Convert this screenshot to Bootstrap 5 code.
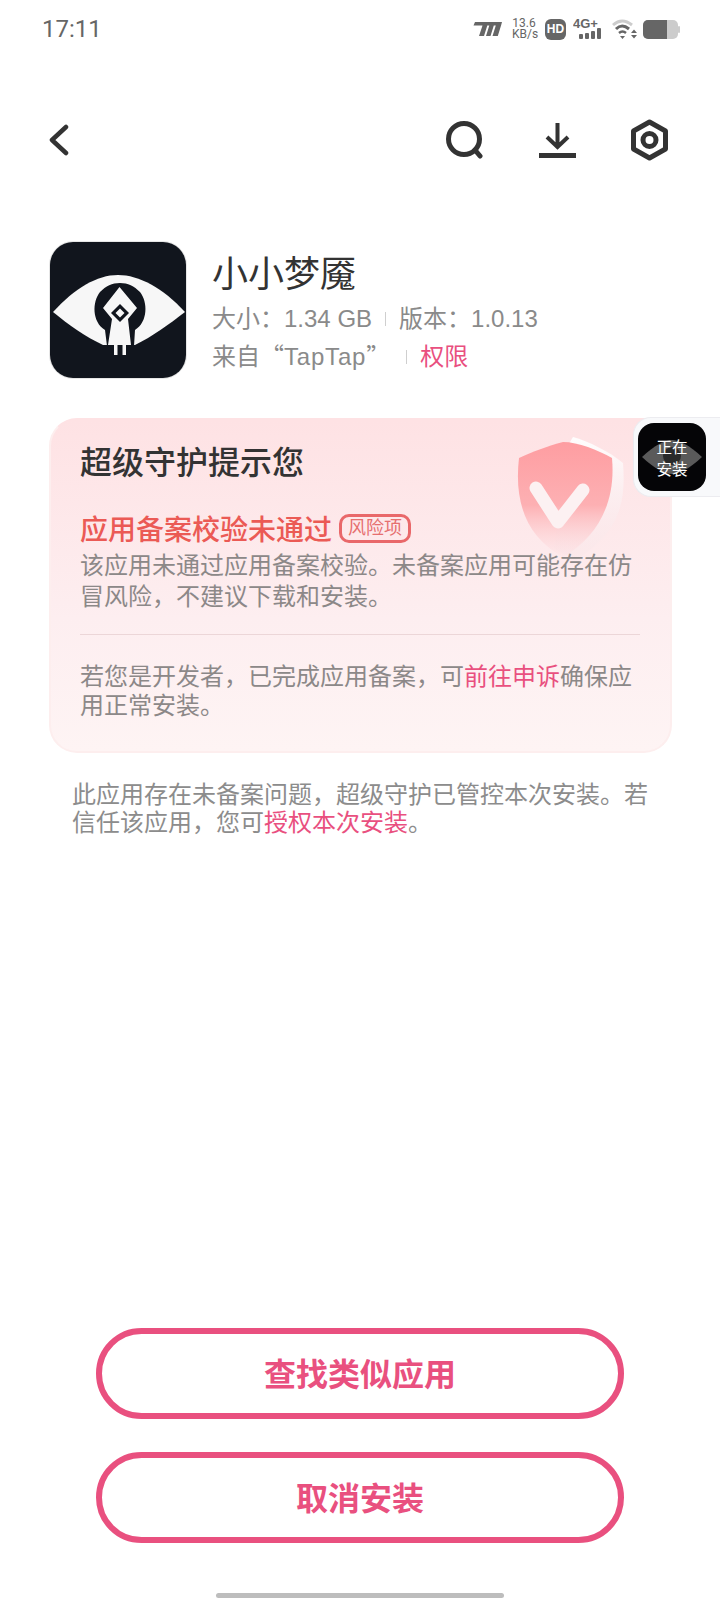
<!DOCTYPE html>
<html lang="zh-CN">
<head>
<meta charset="utf-8">
<title>小小梦魇</title>
<link href="https://cdn.jsdelivr.net/npm/bootstrap@5.3.0/dist/css/bootstrap.min.css" rel="stylesheet">
<style>
:root{--pink:#e9507f;--grey:#8a8a8a}
html,body{margin:0;background:#fff}
body{font-family:"Liberation Sans","Noto Sans CJK SC",sans-serif;font-size:24px;color:var(--grey)}
.screen{width:720px;height:1600px;position:relative;overflow:hidden}
.statusline{height:56px;padding:2px 40px 0 42px}
.clock{font-family:Roboto,sans-serif;font-weight:400;font-size:24px;color:#666}
.speed{font-family:Roboto,sans-serif;color:#666;font-size:12px;line-height:11px;width:24px;text-align:center}
.hdtag{width:21px;height:21px;border-radius:6px;background:#666;color:#fff;font:bold 12px/21px "Liberation Sans",sans-serif;text-align:center}
.toolbar{height:60px;margin-top:54px;padding:0 52px 0 48px}
.toolgroup{gap:55px}
.apphead{margin-top:71px;padding-left:49px;gap:25px}
.appicon{width:138px;height:138px;flex:none;border-radius:24px;border:1px solid #e6e6e6;overflow:hidden}
.appicon svg{display:block}
.appname{font-size:36px;line-height:46px;color:#333;font-family:"Noto Sans CJK SC",sans-serif;margin-top:7px}
.metaline{line-height:36px;white-space:nowrap}
.vbar{display:inline-block;width:1px;height:14px;background:#cfcfcf;margin:0 13px;vertical-align:1px}
.vbar.shifted{margin:0 13px 0 16px}
.cjkquote{font-family:"Noto Sans CJK SC",sans-serif}
.latinname{letter-spacing:.8px}
.pinklink{color:var(--pink);text-decoration:none}
.guard{margin:39px 48px 0 49px;height:335px;border-radius:28px;padding:16px 30px 0 29px;position:relative;background:linear-gradient(180deg,#fee2e4 0%,#fdeef0 60%,#fef4f4 100%);border:2px solid #fdeeee;border-top-color:#fee2e4}
.guard>*{position:relative}
.guard .shieldart{position:absolute;left:459px;top:12px}
.guardtitle{font-size:32px;line-height:48px;font-weight:500;color:#333;font-family:"Noto Sans CJK SC",sans-serif}
.riskline{margin-top:25px;margin-bottom:3px;line-height:38px;height:38px}
.risktitle{font-size:28px;font-weight:500;color:#eb5a55;font-family:"Noto Sans CJK SC",sans-serif}
.risktag{font-size:18px;line-height:23px;color:#e66f6f;border:3px solid #e9686a;border-radius:10px;padding:0 6px;height:29px;margin-left:7px}
.guardtext{line-height:31px;margin:0;color:#8c8888}
.guardrule{height:1px;background:#ecd6d8;margin:22px 0 28px;opacity:1;border:0}
.guardnote{line-height:28.5px;margin:0;color:#8c8888}
.trustnote{margin:28px 40px 0 72px;line-height:28px;color:#8c8c8c}
.actions{margin-top:auto;gap:33px}
.pillbtn{width:528px;height:91px;border:6px solid var(--pink);border-radius:46px;background:#fff;color:var(--pink);font-size:32px;font-weight:700;line-height:1;font-family:"Noto Sans CJK SC",sans-serif;padding:0 0 4px}
.pillbtn:hover{background:#fff;color:var(--pink);border-color:var(--pink)}
.homebar{width:288px;height:5px;border-radius:3px;background:#bdbdbd;margin:50px 0 2px 216px}
.floater{position:absolute;left:633px;top:417px;width:87px;height:80px;background:#f8f9fb;border:1px solid #ececf0;border-right:0;border-radius:18px 0 0 18px;padding:5px 4px}
.floaticon{width:68px;height:68px;border-radius:16px;background:#050507;position:relative;overflow:hidden;color:#fff;font-size:15.5px;line-height:22.4px;text-align:center;padding-top:12px}
.floaticon svg{position:absolute;left:3px;top:16px}
.floaticon span{position:relative;display:block;font-family:"Noto Sans CJK SC",sans-serif}
</style>
</head>
<body>
<div class="screen d-flex flex-column">
  <div class="statusline d-flex justify-content-between align-items-center">
    <div class="clock">17:11</div>
    <div class="d-flex align-items-center">
      <svg width="30" height="16" viewBox="0 0 30 16" fill="#666"><path d="M3 1h27l-.8 3-3.400 11H20.500l3.300-10.500h-2L18.500 15H14l3.300-10.500h-2L12 15H7l3.500-10.500H1.500z"/></svg>
      <div class="speed" style="margin-left:10px">13.6<br>KB/s</div>
      <div class="hdtag" style="margin-left:9px">HD</div>
      <svg style="margin-left:7px" width="31" height="26" viewBox="0 0 31 26" fill="#666"><text x="0" y="12" font-family="Liberation Sans" font-weight="700" font-size="13">4G+</text><rect x="6" y="18" width="4" height="5" rx="1"/><rect x="12" y="17" width="4" height="6" rx="1"/><rect x="18" y="15" width="4" height="8" rx="1"/><rect x="24" y="12" width="4" height="11" rx="1"/></svg>
      <svg style="margin-left:8px" width="26" height="22" viewBox="0 0 26 22" fill="none"><path d="M1 7Q10-1 20 7" stroke="#ccc" stroke-width="3"/><path d="M4 11Q10 5 17 11" stroke="#666" stroke-width="3"/><path d="M7 15Q10.500 12 14 15" stroke="#666" stroke-width="2.500"/><path d="M8 18h5l-2.500 3z" fill="#666"/><path d="M19 15h6l-3-3.500zM19 17h6l-3 3.500z" fill="#666"/></svg>
      <svg style="margin-left:5px" width="37" height="19" viewBox="0 0 37 19"><rect x="0" y="0" width="35" height="19" rx="5" fill="#ccc"/><path d="M5 0h19v19H5a5 5 0 0 1-5-5V5a5 5 0 0 1 5-5z" fill="#666"/><rect x="35" y="6" width="2" height="7" rx="1" fill="#ccc"/></svg>
    </div>
  </div>

  <div class="toolbar d-flex justify-content-between align-items-center">
    <svg width="22" height="32" viewBox="0 0 22 32" fill="none" stroke="#333" stroke-width="4.500" stroke-linecap="round" stroke-linejoin="round"><path d="M18 3 4 16l14 13"/></svg>
    <div class="d-flex align-items-center toolgroup">
      <svg width="38" height="38" viewBox="0 0 38 38" fill="none" stroke="#333" stroke-width="5" stroke-linecap="round"><circle cx="18" cy="18" r="15.500"/><path d="m29 29 5 6"/></svg>
      <svg width="37" height="36" viewBox="0 0 37 36" fill="none" stroke="#333" stroke-width="4"><path d="M18.500 1v24M8 15l10.500 10L29 15"/><path d="M0 33.500h37" stroke-width="5"/></svg>
      <svg width="37" height="42" viewBox="0 0 37 42" fill="none" stroke="#333" stroke-width="5" stroke-linejoin="round"><path d="M18.500 3 34.500 12v18l-16 9-16-9V12z"/><circle cx="18.500" cy="21" r="6.500"/></svg>
    </div>
  </div>

  <div class="apphead d-flex">
    <div class="appicon">
      <svg width="136" height="136" viewBox="0 0 136 136">
        <rect width="136" height="136" fill="#11151d"/>
        <path d="M3 70C25 46 47 33 68 33s45 13 67 37c-17 13-32 24-50 33H53C36 95 20 84 3 70z" fill="#f7f7f7"/>
        <path d="M57 104 55 88C42 80 42 60 50 50 56 44 62 41 70 41s14 3 20 9c8 10 8 30-5 38l-1 16z" fill="#11151d"/>
        <path d="M69.500 45 87 66 78 77 81 103H76V113H72.500V103H67.500V113H64V103H58L62 77 53 66z" fill="#f7f7f7"/>
        <path d="M70 62 79 71 70 80 61 71z" fill="#11151d"/>
        <path d="M70 66.500 74.500 71 70 75.500 65.500 71z" fill="#f7f7f7"/>
      </svg>
    </div>
    <div>
      <div class="appname">小小梦魇</div>
      <div class="metaline" style="margin-top:7px">大小：1.34 GB<span class="vbar"></span>版本：1.0.13</div>
      <div class="metaline">来自<span class="cjkquote">“</span><span class="latinname">TapTap</span><span class="cjkquote">”</span><span class="vbar shifted"></span><a class="pinklink" href="#">权限</a></div>
    </div>
  </div>

  <div class="guard">
    <svg class="shieldart" width="120" height="130" viewBox="0 0 120 130">
      <defs>
        <linearGradient id="shf" x1="0" y1="0" x2="0" y2="1"><stop offset="0" stop-color="#fe9da1"/><stop offset=".55" stop-color="#fdb0b3"/><stop offset="1" stop-color="#fddde0" stop-opacity=".2"/></linearGradient>
        <linearGradient id="shs" x1="0" y1="0" x2="0" y2="1"><stop offset="0" stop-color="#fff" stop-opacity=".95"/><stop offset="1" stop-color="#f6e4e7" stop-opacity=".25"/></linearGradient>
      </defs>
      <path d="M63 5C78 9 100 20 113 31 116 70 110 100 66 128 56 124 50 120 44 116L60 10z" fill="url(#shs)"/>
      <path d="M53 10C38 14 22 20 9 26 4 70 16 105 53 125 88 105 106 70 102 26 88 18 68 10 53 10z" fill="url(#shf)"/>
      <path d="M26 56 48 90 73 58" fill="none" stroke="#fcf1f2" stroke-width="13" stroke-linecap="round" stroke-linejoin="round"/>
    </svg>
    <div class="guardtitle">超级守护提示您</div>
    <div class="riskline d-flex align-items-center">
      <span class="risktitle">应用备案校验未通过</span><span class="risktag">风险项</span>
    </div>
    <p class="guardtext">该应用未通过应用备案校验。未备案应用可能存在仿<br>冒风险，不建议下载和安装。</p>
    <hr class="guardrule">
    <p class="guardnote">若您是开发者，已完成应用备案，可<a class="pinklink" href="#">前往申诉</a>确保应<br>用正常安装。</p>
  </div>

  <div class="trustnote">此应用存在未备案问题，超级守护已管控本次安装。若<br>信任该应用，您可<a class="pinklink" href="#">授权本次安装</a>。</div>

  <div class="actions d-flex flex-column align-items-center">
    <button type="button" class="btn pillbtn">查找类似应用</button>
    <button type="button" class="btn pillbtn">取消安装</button>
  </div>
  <div class="homebar"></div>

  <div class="floater">
    <div class="floaticon">
      <svg width="62" height="36" viewBox="0 0 62 36"><path d="M1 18C14 6 24 1 31 1s17 5 30 17C48 30 38 35 31 35S14 30 1 18z" fill="#5a5a5a"/><circle cx="31" cy="17" r="9" fill="#2a2a2a"/></svg>
      <span>正在</span><span>安装</span>
    </div>
  </div>
</div>
<script src="https://cdn.jsdelivr.net/npm/bootstrap@5.3.0/dist/js/bootstrap.bundle.min.js"></script>
</body>
</html>
